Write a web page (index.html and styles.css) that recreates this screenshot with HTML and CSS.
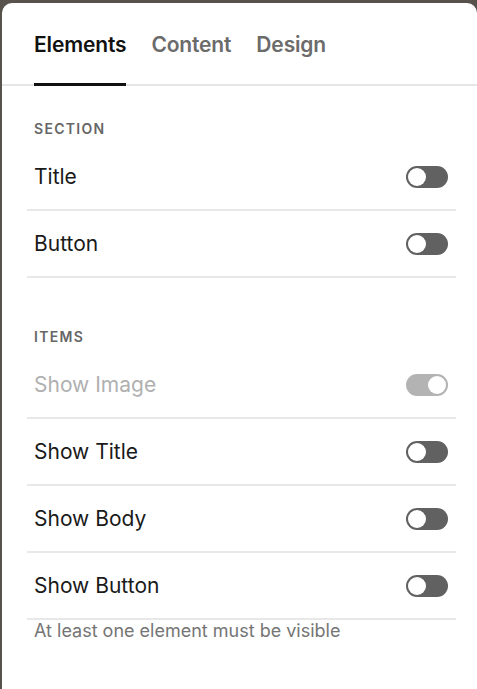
FILE: index.html
```html
<!DOCTYPE html>
<html lang="en">
<head>
    <meta charset="UTF-8">
    <meta name="viewport" content="width=device-width, initial-scale=1.0">
    <title>Elements</title>
    <link rel="stylesheet" href="styles.css">
</head>
<body>
    <main class="panel">
        <nav class="tabs">
            <a class="tab active">Elements</a>
            <a class="tab">Content</a>
            <a class="tab">Design</a>
        </nav>

        <section class="group">
            <h2 class="label">Section</h2>
            <ul class="rows">
                <li class="row"><span>Title</span><span class="toggle"></span></li>
                <li class="row"><span>Button</span><span class="toggle"></span></li>
            </ul>
        </section>

        <section class="group items">
            <h2 class="label">Items</h2>
            <ul class="rows">
                <li class="row disabled"><span>Show Image</span><span class="toggle on"></span></li>
                <li class="row"><span>Show Title</span><span class="toggle"></span></li>
                <li class="row"><span>Show Body</span><span class="toggle"></span></li>
                <li class="row"><span>Show Button</span><span class="toggle"></span></li>
            </ul>
            <p class="hint">At least one element must be visible</p>
        </section>
    </main>
</body>
</html>
```

FILE: styles.css
```css
html {
    font-family: Inter, 'Liberation Sans', sans-serif;
    color: #1a1a1a;
}
body {
    margin: 0;
    background: #57534c;
}
.panel {
    margin: 3px 0 0 2px;
    min-height: 686px;
    background: #fff;
    border-radius: 10px 10px 0 0;
}
.tabs {
    display: flex;
    gap: 25px;
    padding: 0 32px;
    border-bottom: 2px solid #e6e6e6;
}
.tab {
    margin-bottom: -2px;
    padding: 30px 0 26px;
    border-bottom: 3px solid transparent;
    font-size: 21px;
    line-height: 24px;
    font-weight: 600;
    color: #6b6b6b;
    letter-spacing: -0.15px;
}
.tab.active {
    color: #111;
    border-bottom-color: #111;
}
.group {
    margin: 34px 21px 0 25px;
}
.group.items {
    margin-top: 50px;
}
.label {
    margin: 0 0 6px 7px;
    font-size: 14px;
    line-height: 18px;
    font-weight: 600;
    letter-spacing: 1.3px;
    text-transform: uppercase;
    color: #666;
}
.rows {
    list-style: none;
    margin: 0;
    padding: 0;
}
.row {
    display: flex;
    align-items: center;
    justify-content: space-between;
    height: 65px;
    padding: 0 8px 0 7px;
    border-bottom: 2px solid #e8e8e8;
    font-size: 21px;
}
.row.disabled {
    color: #b0b0b0;
}
.toggle {
    position: relative;
    width: 42px;
    height: 22px;
    border-radius: 11px;
    background: #616161;
}
.toggle::after {
    content: '';
    position: absolute;
    top: 2px;
    left: 2px;
    width: 18px;
    height: 18px;
    border-radius: 50%;
    background: #fff;
}
.toggle.on {
    background: #b3b3b3;
}
.toggle.on::after {
    left: 22px;
}
.hint {
    margin: 0 0 0 7px;
    font-size: 18px;
    line-height: 22px;
    color: #757575;
}
```
